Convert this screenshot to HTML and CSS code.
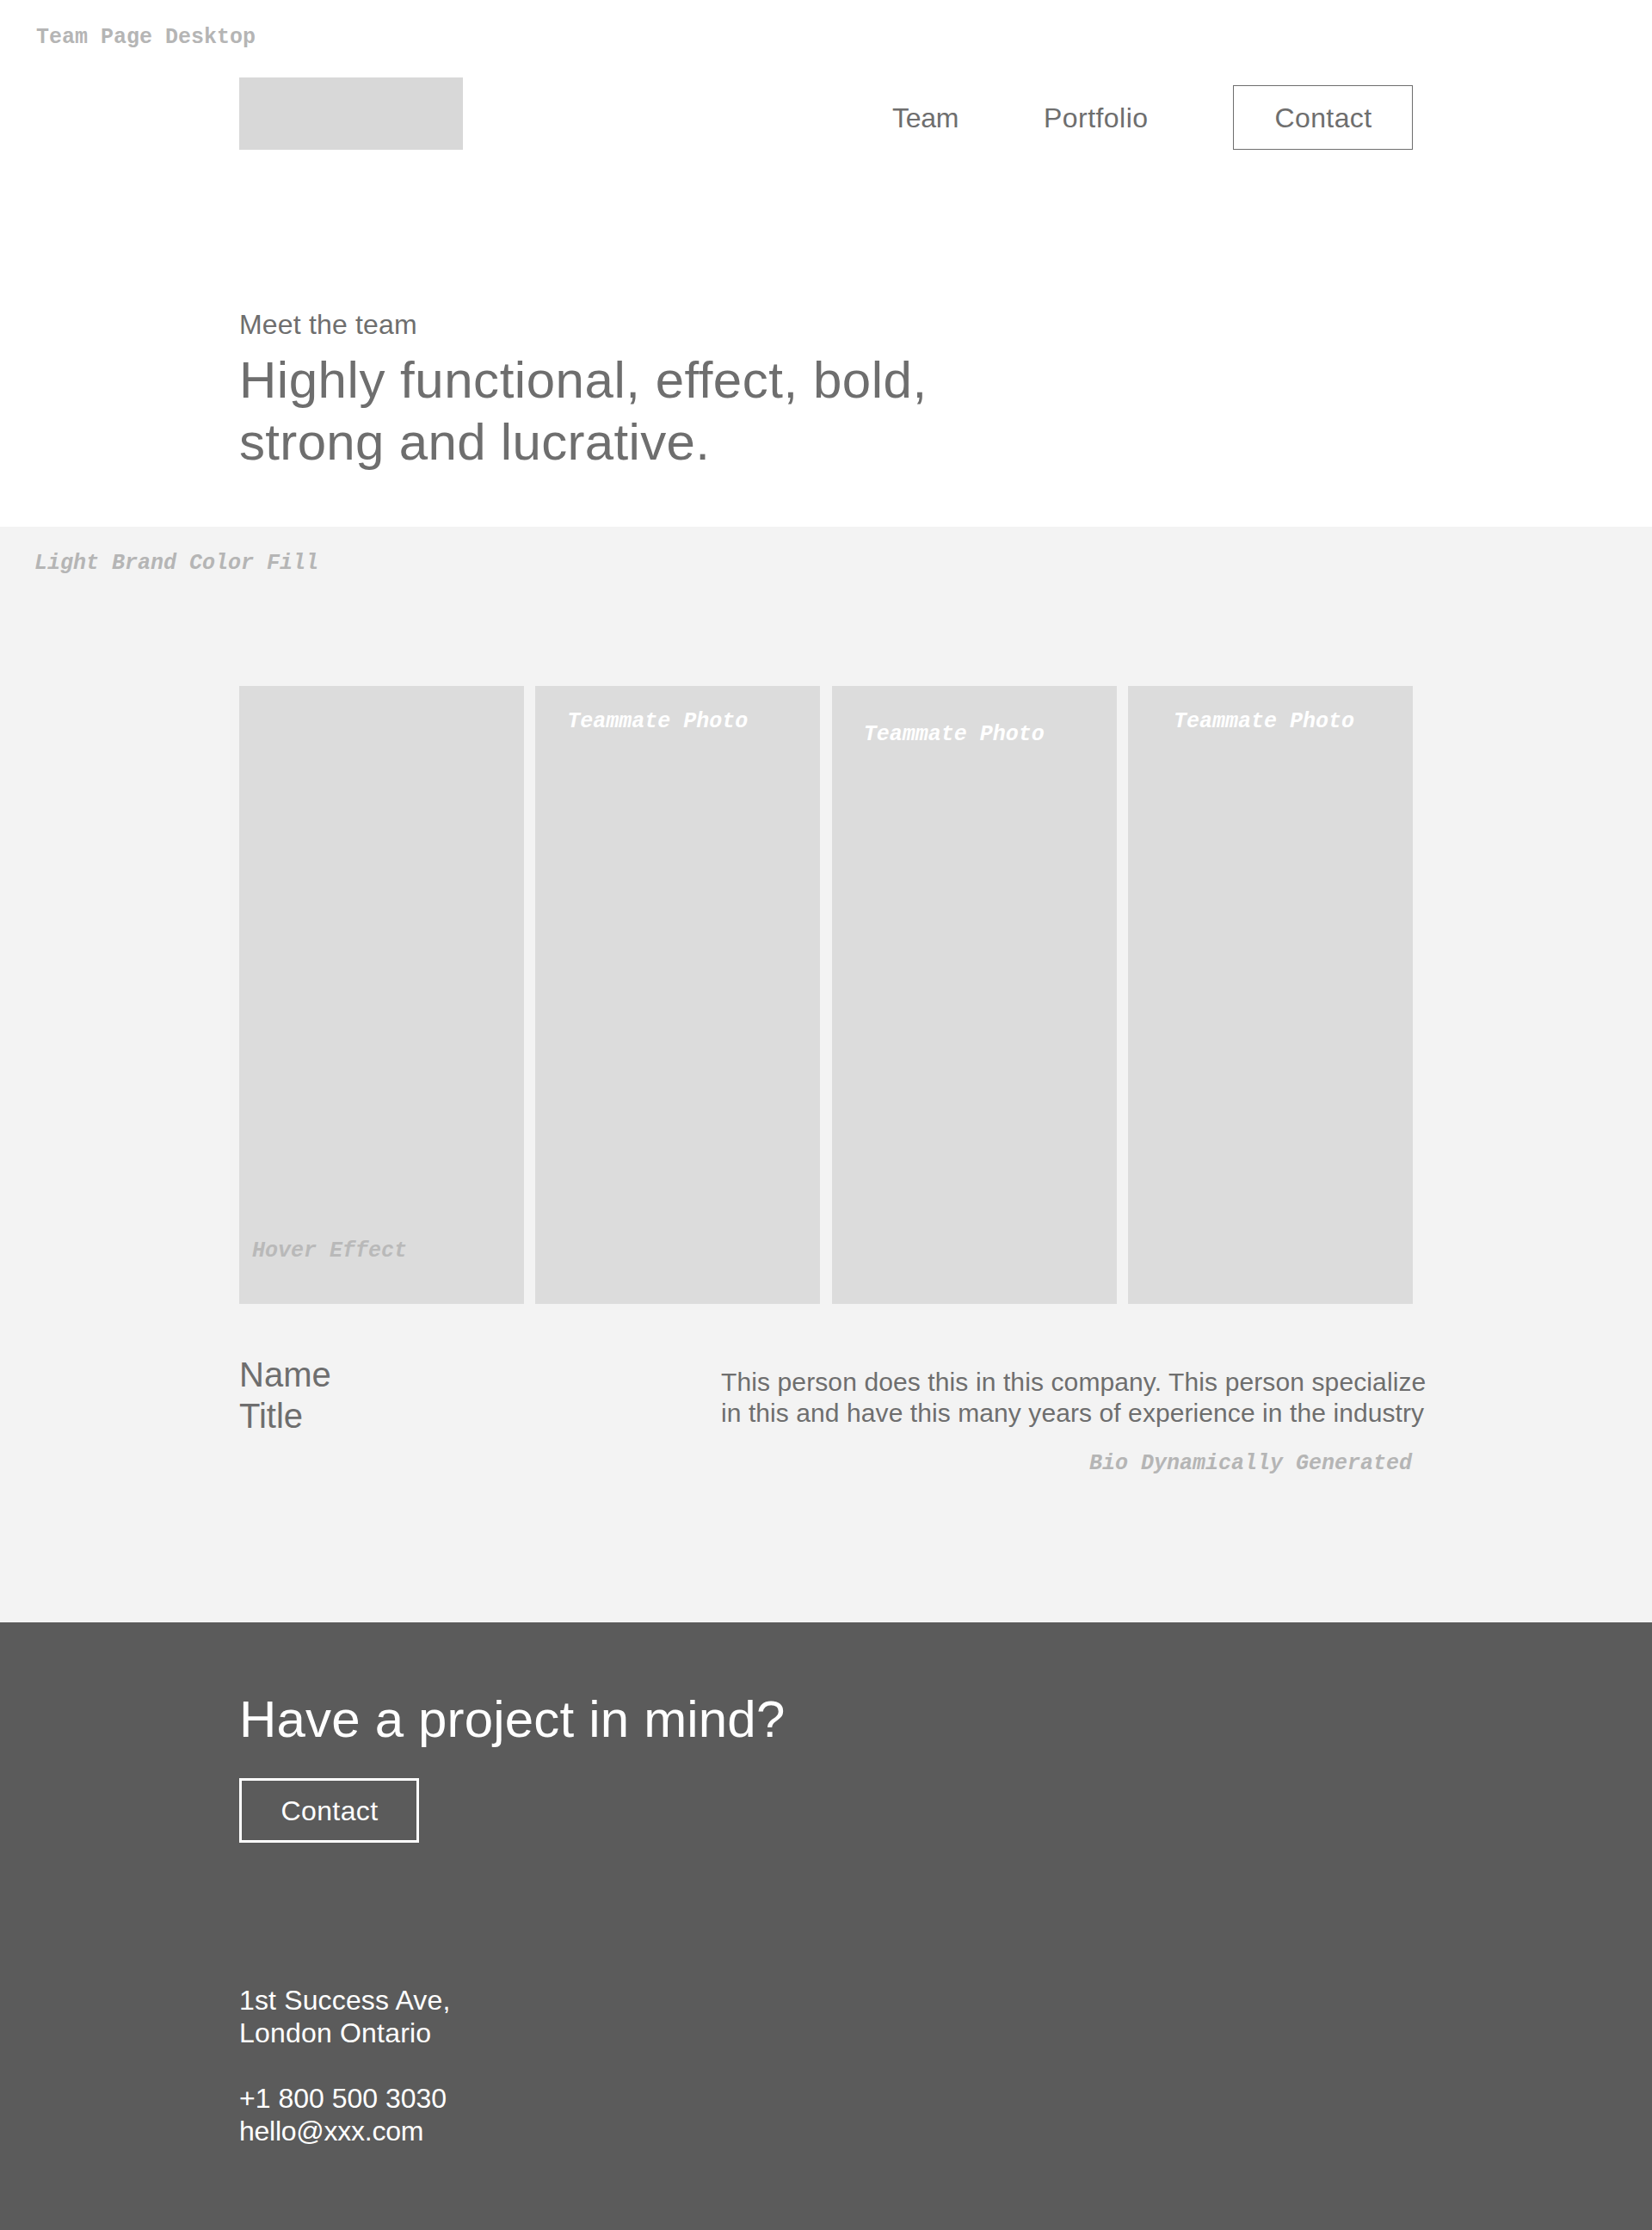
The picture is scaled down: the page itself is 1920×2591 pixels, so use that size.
FILE: index.html
```html
<!DOCTYPE html>
<html lang="en">
<head>
<meta charset="utf-8">
<title>Team Page Desktop</title>
<link rel="stylesheet" href="styles.css">
</head>
<body>
<header class="top">
  <p class="note page-note">Team Page Desktop</p>
  <div class="container bar">
    <div class="logo"></div>
    <nav class="nav">
      <a class="nav-team">Team</a>
      <a class="nav-portfolio">Portfolio</a>
      <a class="button">Contact</a>
    </nav>
  </div>
  <div class="container hero">
    <p class="eyebrow">Meet the team</p>
    <h1 class="headline"><span class="line line-a">Highly functional, effect, bold,</span><span class="line line-b">strong and lucrative.</span></h1>
  </div>
</header>
<main class="team">
  <p class="note fill-note">Light Brand Color Fill</p>
  <div class="container photos">
    <div class="photo photo-hover"><span class="note">Hover Effect</span></div>
    <div class="photo"><span class="note">Teammate Photo</span></div>
    <div class="photo photo-low"><span class="note">Teammate Photo</span></div>
    <div class="photo photo-inset"><span class="note">Teammate Photo</span></div>
  </div>
  <div class="container details">
    <h2 class="name">Name<br>Title</h2>
    <div class="bio">
      <p class="bio-text"><span class="line bio-a">This person does this in this company. This person specialize</span><span class="line bio-b">in this and have this many years of experience in the industry</span></p>
      <p class="note bio-note">Bio Dynamically Generated</p>
    </div>
  </div>
</main>
<footer class="footer">
  <div class="container">
    <h2 class="cta">Have a project in mind?</h2>
    <a class="button button-light">Contact</a>
    <address class="address">
      <p class="address-block"><span class="line street">1st Success Ave,</span><span class="line city">London Ontario</span></p>
      <p class="address-block"><span class="line">+1 800 500 3030</span><span class="line email">hello@xxx.com</span></p>
    </address>
  </div>
</footer>
</body>
</html>
```

FILE: styles.css
```css
* { box-sizing: border-box; }
body {
  margin: 0;
  background: #fff;
  color: #6e6e6e;
  font: 32px/38px "Liberation Sans", Arial, sans-serif;
}
p, h1, h2 { margin: 0; font-weight: 400; }
.container { width: 1364px; margin: 0 auto; }
.line { display: block; white-space: nowrap; }
.note {
  font: italic bold 25px/30px "Liberation Mono", "Courier New", monospace;
  color: #b5b5b5;
  white-space: nowrap;
}

.top { height: 612px; padding-top: 29px; }
.page-note { padding-left: 42px; font-style: normal; }
.bar { display: flex; justify-content: space-between; align-items: flex-end; height: 115px; }
.logo { width: 260px; height: 84px; background: #d8d8d8; }
.nav { display: flex; height: 75px; line-height: 75px; }
.nav-team { width: 176px; padding: 1px 0 0 1px; letter-spacing: -.3px; }
.nav-portfolio { width: 221px; padding: 1px 0 0 1px; letter-spacing: .45px; }
.button {
  display: block;
  width: 209px;
  height: 75px;
  padding: 1px 0 0 1px;
  border: 1px solid #6e6e6e;
  line-height: 73px;
  text-align: center;
  letter-spacing: .4px;
}
.hero { padding-top: 184px; }
.eyebrow { line-height: 38px; letter-spacing: .17px; }
.headline { padding-top: 10px; font-size: 60px; line-height: 72px; }
.line-a { letter-spacing: .53px; }
.line-b { letter-spacing: .33px; }

.team { height: 1273px; padding-top: 28px; background: #f3f3f3; }
.fill-note { padding-left: 40px; }
.photos { display: grid; grid-template-columns: repeat(4, 331px); justify-content: space-between; margin-top: 127px; }
.photo { height: 718px; padding: 27px 0 0 37px; background: #dcdcdc; }
.photo .note { display: block; color: #fff; }
.photo-low { padding-top: 42px; }
.photo-inset { padding-left: 53px; }
.photo-hover { display: flex; align-items: flex-end; padding: 0 0 46px 15px; }
.photo-hover .note { color: #b9b9b9; }
.details { display: flex; margin-top: 58px; }
.name { width: 560px; font-size: 40px; line-height: 48px; }
.bio { width: 803px; padding-top: 15px; }
.bio-text { font-size: 30px; line-height: 36px; }
.bio-a { letter-spacing: .11px; }
.bio-b { letter-spacing: .08px; }
.bio-note { padding-top: 26px; text-align: right; }

.footer { height: 706px; padding-top: 77px; background: #5b5b5b; color: #fff; }
.cta { font-size: 60px; line-height: 72px; letter-spacing: .18px; }
.button-light { margin-top: 32px; padding: 0 0 0 1px; border: 3px solid #fff; line-height: 70px; }
.address { margin-top: 164px; font-style: normal; }
.address-block + .address-block { margin-top: 38px; }
.street { letter-spacing: .15px; }
.city { letter-spacing: .19px; }
.email { letter-spacing: -.25px; }
```
